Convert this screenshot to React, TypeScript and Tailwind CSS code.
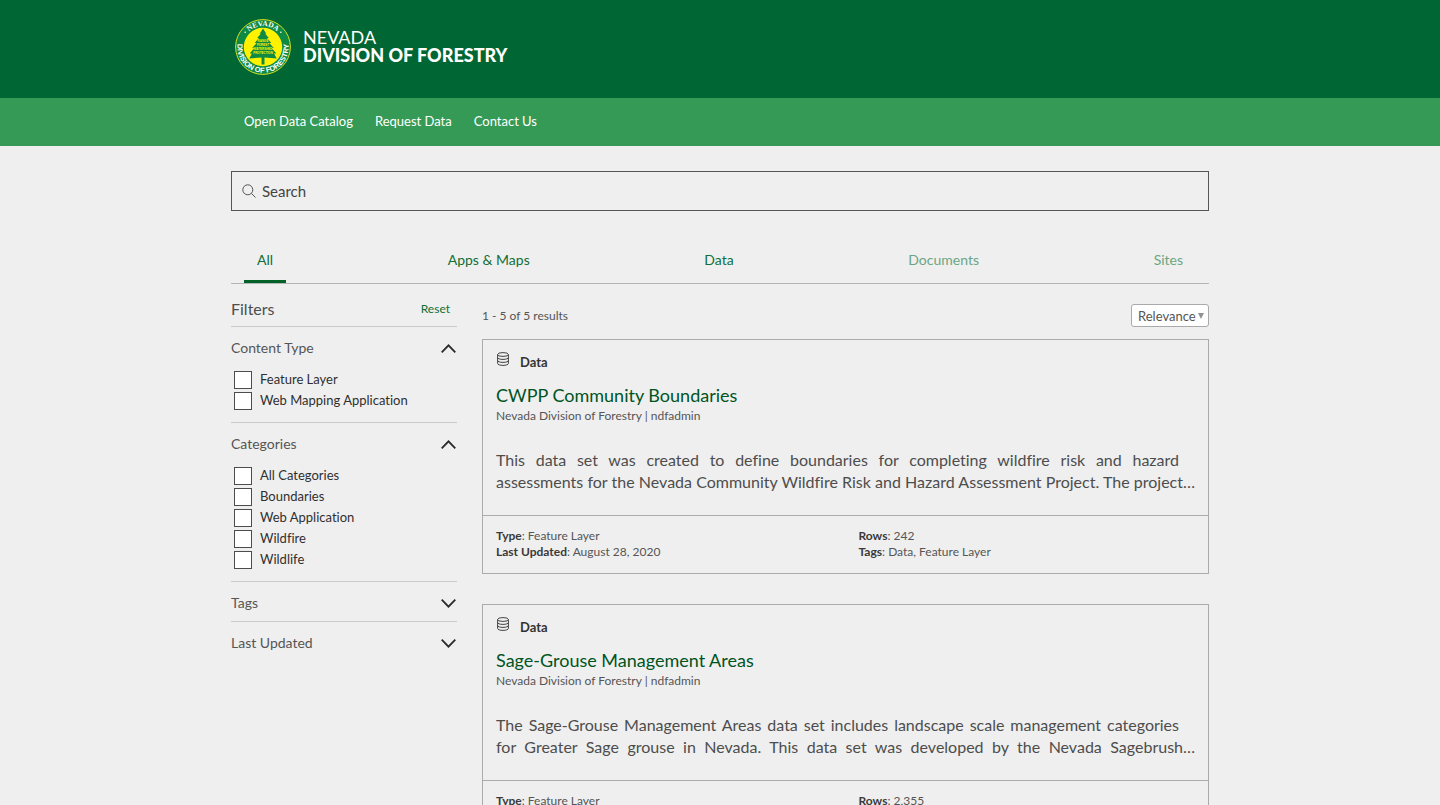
import { useId, useState } from "react";
import type { ReactNode } from "react";

type Tab = { label: string; muted?: boolean };

const tabs: Tab[] = [
  { label: "All" },
  { label: "Apps & Maps" },
  { label: "Data" },
  { label: "Documents", muted: true },
  { label: "Sites", muted: true },
];

const results = [
  {
    title: "CWPP Community Boundaries",
    lines: [
      "This data set was created to define boundaries for completing wildfire risk and hazard",
      "assessments for the Nevada Community Wildfire Risk and Hazard Assessment Project. The project…",
    ],
    updated: "August 28, 2020",
    rows: "242",
  },
  {
    title: "Sage-Grouse Management Areas",
    lines: [
      "The Sage-Grouse Management Areas data set includes landscape scale management categories",
      "for Greater Sage grouse in Nevada. This data set was developed by the Nevada Sagebrush…",
    ],
    updated: "August 28, 2020",
    rows: "2,355",
  },
];

function Seal() {
  return (
    <svg viewBox="0 0 56 56" className="size-14 shrink-0" role="img" aria-label="Nevada Division of Forestry seal">
      <defs>
        <path id="seal-top" d="M7 28a21 21 0 0 1 42 0" />
        <path id="seal-bottom" d="M5.200 16.500A25.600 25.600 0 1 0 50.800 16.500" />
      </defs>
      <circle cx="28" cy="28" r="27.400" fill="#0f8a43" stroke="#d9e021" strokeWidth="1" />
      <circle cx="28" cy="28" r="19.200" fill="#fff200" />
      <g fill="#fff" fontWeight="700" textAnchor="middle">
        <text fontSize="7.400" fontFamily="Liberation Serif, serif">
          <textPath href="#seal-top" startOffset="50%">NEVADA</textPath>
        </text>
        <text fontSize="7.400" fontFamily="Liberation Sans, sans-serif">
          <textPath href="#seal-bottom" startOffset="50%">DIVISION OF FORESTRY</textPath>
        </text>
      </g>
      <circle cx="10.200" cy="13.200" r="0.8" fill="#fff" />
      <circle cx="45.800" cy="13.200" r="0.8" fill="#fff" />
      <path
        fill="#0f8a43"
        d="M28 9.500l3.400 5.200-1.300-.2 3.700 4.600-1.700-.1 4.200 5-2-.1 4.500 5-2.100.1 4.600 5.400-2.200.2 2.600 4.800-12.200-.8V45.500h-3V38.600l-12.200.8 2.600-4.800-2.200-.2 4.600-5.400-2.100-.1 4.500-5-2 .1 4.200-5-1.700.1 3.700-4.600-1.300.2z"
      />
      <g fill="#fff200" fontFamily="Liberation Sans, sans-serif" fontWeight="700" fontSize="3" textAnchor="middle">
        <text x="28" y="23.300">RANGE</text>
        <text x="28" y="27.300">FOREST</text>
        <text x="28" y="31.300">WATERSHED</text>
        <text x="28" y="35.300">PROTECTION</text>
      </g>
    </svg>
  );
}

function Chevron({ open }: { open: boolean }) {
  return (
    <svg viewBox="0 0 15 9" className="h-[9px] w-[15px]" fill="none" stroke="#2a2a2a" strokeWidth="1.8" aria-hidden="true">
      {open ? <path d="M.7 8.300 7.500 1.300 14.300 8.300" /> : <path d="M.7.7 7.500 7.700 14.300.7" />}
    </svg>
  );
}

function DatabaseIcon() {
  return (
    <svg viewBox="0 0 14 14" className="size-3.5" fill="none" stroke="#444" strokeWidth="1" aria-hidden="true">
      <ellipse cx="7" cy="2.500" rx="5.400" ry="1.900" />
      <path d="M1.600 2.500v8.900c0 1.200 2.400 2 5.400 2s5.400-.8 5.400-2V2.500M1.600 5.500c0 1.100 2.400 1.900 5.400 1.900s5.400-.8 5.400-1.900M1.600 8.500c0 1.100 2.400 1.900 5.400 1.900s5.400-.8 5.400-1.900" />
    </svg>
  );
}

function FilterCheckbox({ label }: { label: string }) {
  const id = useId();
  return (
    <div className="flex h-[21px] items-center gap-2">
      <input
        id={id}
        type="checkbox"
        className="size-[18px] shrink-0 appearance-none border border-[#4c4c4c] bg-white checked:bg-[#006633]"
      />
      <label htmlFor={id} className="pb-0.5 text-[13px] leading-[18px] text-[#2f2f2f]">
        {label}
      </label>
    </div>
  );
}

function FilterGroup({ title, initiallyOpen = false, last = false, children }: { title: string; initiallyOpen?: boolean; last?: boolean; children?: ReactNode }) {
  const [open, setOpen] = useState(initiallyOpen);
  return (
    <section className={last ? "" : "border-b border-[#cbcbcb]"}>
      <button
        type="button"
        aria-expanded={open}
        onClick={() => setOpen(!open)}
        className="flex h-[39px] w-full items-center justify-between pt-[3px] pr-px text-left text-[14px] leading-5 text-[#555]"
      >
        {title}
        <Chevron open={open} />
      </button>
      {open && children && <div className="px-[3px] pt-[3px] pb-[11px]">{children}</div>}
    </section>
  );
}

function ResultCard({ title, lines, updated, rows }: (typeof results)[number]) {
  return (
    <article className="border border-[#ababab]">
      <div className="px-[13px] pt-3 pb-[22px]">
        <div className="flex items-start gap-2.5 text-[13px] leading-5 font-bold text-[#333]">
          <DatabaseIcon />
          <span>Data</span>
        </div>
        <h2 className="mt-[11px] text-[18px] leading-6 text-[#00541f]">
          <a href="#result">{title}</a>
        </h2>
        <p className="text-[12px] leading-[18px] text-[#555]">Nevada Division of Forestry | ndfadmin</p>
        <p className="mt-6 text-[16px] leading-[22px] text-[#4d4d4d]">
          <span className="mr-4 block [text-align-last:justify]">{lines[0]}</span>
          <span className="block [text-align-last:justify]">{lines[1]}</span>
        </p>
      </div>
      <div className="grid grid-cols-2 border-t border-[#ababab] pt-3 pb-[13px] text-[12px] leading-4 text-[#555]">
        <div className="px-[13px]">
          <p><b className="text-[#3a3a3a]">Type</b>: Feature Layer</p>
          <p><b className="text-[#3a3a3a]">Last Updated</b>: {updated}</p>
        </div>
        <div className="px-[13px]">
          <p><b className="text-[#3a3a3a]">Rows</b>: {rows}</p>
          <p><b className="text-[#3a3a3a]">Tags</b>: Data, Feature Layer</p>
        </div>
      </div>
    </article>
  );
}

export default function App() {
  const [active, setActive] = useState("All");
  return (
    <div className="min-h-screen bg-[#efefef] font-['Lato','Liberation_Sans',sans-serif] [font-variant-ligatures:none]">
      <header>
        <div className="bg-[#006633]">
          <div className="mx-auto flex max-w-[978px] items-center gap-3 px-1 pt-[19px] pb-[23px]">
            <Seal />
            <div className="pb-0.5 text-white">
              <div className="text-[18px] leading-[18px]">NEVADA</div>
              <div className="text-[18px] leading-[18px] font-black">DIVISION OF FORESTRY</div>
            </div>
          </div>
        </div>
        <nav className="bg-[#359a55]">
          <div className="mx-auto flex h-12 max-w-[978px] items-center gap-[22px] px-[13px] text-[13px] text-white">
            <a href="#catalog">Open Data Catalog</a>
            <a href="#request">Request Data</a>
            <a href="#contact">Contact Us</a>
          </div>
        </nav>
      </header>

      <main className="mx-auto max-w-[978px] pt-[25px] pb-8">
        <label className="flex h-10 items-center gap-1.5 border border-[#555] px-2.5">
          <svg viewBox="0 0 14 14" className="size-3.5" fill="none" stroke="#555" strokeWidth="1" aria-hidden="true">
            <circle cx="5.800" cy="5.800" r="5" />
            <path d="M9.400 9.400 13.500 13.500" />
          </svg>
          <input
            type="search"
            aria-label="Search"
            placeholder="Search"
            className="min-w-0 flex-1 bg-transparent text-[15px] text-[#333] outline-none placeholder:text-[#444]"
          />
        </label>

        <div role="tablist" className="mt-[25px] flex justify-between border-b border-[#b5b5b5] px-[13px]">
          {tabs.map((tab) => (
            <button
              key={tab.label}
              type="button"
              role="tab"
              aria-selected={active === tab.label}
              onClick={() => setActive(tab.label)}
              className={`h-[47px] border-b-3 px-[13px] pt-0.5 text-[14px] ${active === tab.label ? "border-[#006227]" : "border-transparent"} ${tab.muted ? "text-[#6ba683]" : "text-[#0f7037]"}`}
            >
              {tab.label}
            </button>
          ))}
        </div>

        <div className="flex items-start gap-[25px]">
          <aside className="w-[226px] shrink-0">
            <div className="flex h-[43px] items-center justify-between border-b border-[#cbcbcb] pt-2 pr-[7px] text-[#4d4d4d]">
              <h2 className="text-[16px]">Filters</h2>
              <button type="button" className="text-[12px] text-[#0f7037]">Reset</button>
            </div>
            <FilterGroup title="Content Type" initiallyOpen>
              <FilterCheckbox label="Feature Layer" />
              <FilterCheckbox label="Web Mapping Application" />
            </FilterGroup>
            <FilterGroup title="Categories" initiallyOpen>
              <FilterCheckbox label="All Categories" />
              <FilterCheckbox label="Boundaries" />
              <FilterCheckbox label="Web Application" />
              <FilterCheckbox label="Wildfire" />
              <FilterCheckbox label="Wildlife" />
            </FilterGroup>
            <FilterGroup title="Tags" />
            <FilterGroup title="Last Updated" last />
          </aside>

          <div className="min-w-0 flex-1 pt-5">
            <div className="flex items-center justify-between text-[12px] leading-5 text-[#555]">
              <span>1 - 5 of 5 results</span>
              <span className="relative flex">
                <select
                  aria-label="Sort by"
                  className="h-[23px] w-[78px] appearance-none rounded-[3px] border border-[#aaa] bg-white pl-1.5 text-[13px] leading-5"
                >
                  <option>Relevance</option>
                  <option>Name</option>
                </select>
                <svg viewBox="0 0 6 6" className="pointer-events-none absolute top-[9px] right-[5px] size-1.5" fill="#929292" aria-hidden="true">
                  <path d="M0 0h6L3 6z" />
                </svg>
              </span>
            </div>
            <div className="mt-3 flex flex-col gap-[30px]">
              {results.map((result) => (
                <ResultCard key={result.title} {...result} />
              ))}
            </div>
          </div>
        </div>
      </main>
    </div>
  );
}
